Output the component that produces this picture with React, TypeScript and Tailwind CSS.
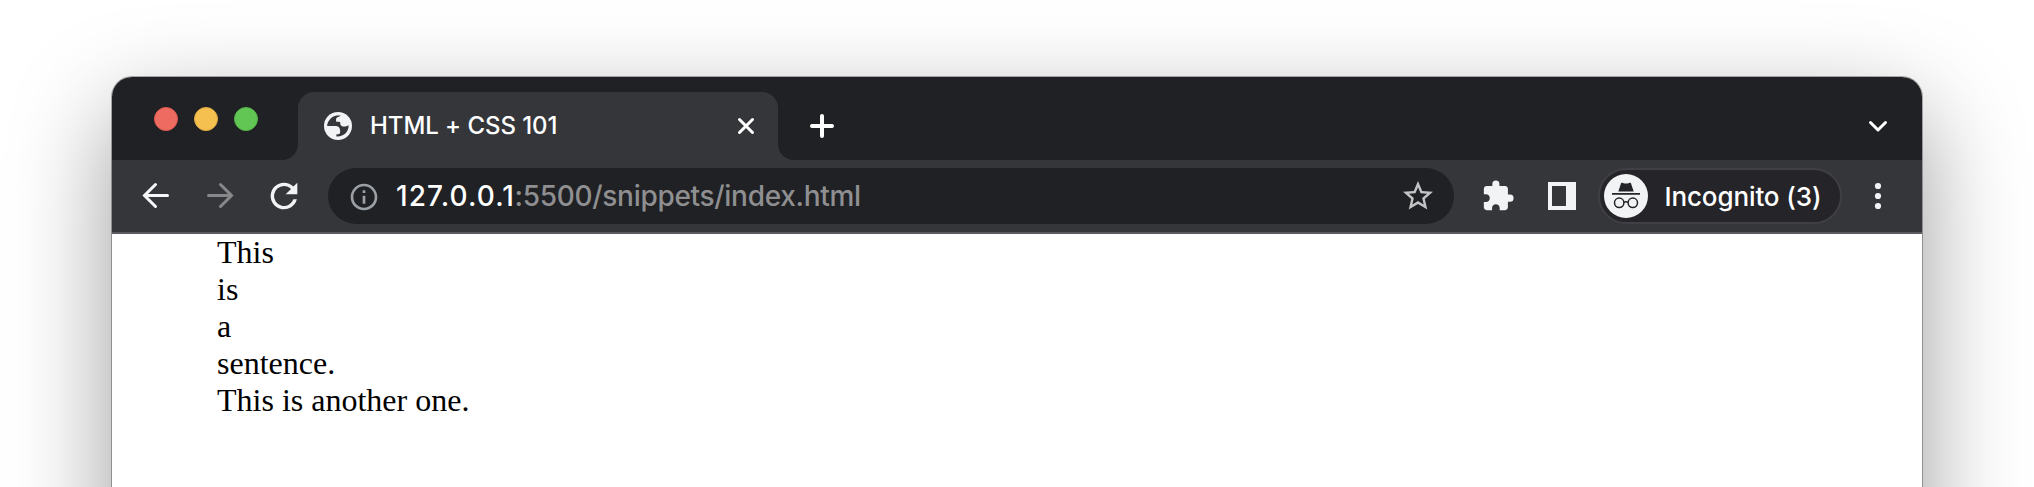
import type { ReactNode } from 'react';

function TabStrip() {
  return (
    <div className="flex h-[83px] bg-[#202124] pl-[38px]">
      <div className="flex w-[132px] gap-4 pt-[30px] pl-[4px]">
        <span className="size-6 rounded-full border border-[#df5950] bg-[#ed6b60]" />
        <span className="size-6 rounded-full border border-[#dfa944] bg-[#f5c04f]" />
        <span className="size-6 rounded-full border border-[#55b449] bg-[#62c655]" />
      </div>
      <div className="flex items-end">
        <CornerLeft />
      </div>
      <div className="mt-[15px] flex w-[480px] items-start rounded-t-[16px] bg-[#35363a] pl-[26px] text-white">
        <svg className="mt-5 size-7 shrink-0" viewBox="0 0 28 28">
          <circle cx="14" cy="14" r="14" fill="#f1f3f4" />
          <path
            d="M3.1 14C3.4 9 7.6 4.2 12.6 3.5L16.7 3.6C15.9 5.1 12.3 4.9 12.1 7.1V9.8H14.8C16.5 9.8 16.3 11 16.4 12.4C16.6 14.6 21.4 15.2 24.6 13.2C24.9 19.5 19.8 24.9 12.4 24.4V22.2H14.2C15.8 22.2 16.1 21.4 16.1 19.6V18.2C16 16 14.6 14.2 12.2 14Z"
            fill="#35363a"
          />
        </svg>
        <span className="mt-[17px] ml-[18px] flex-1 text-[24px] leading-[34px] font-[450] tracking-[-0.06px] whitespace-nowrap">
          HTML + CSS 101
        </span>
        <svg className="mt-6 mr-[22px] size-5" viewBox="0 0 20 20" stroke="#fff" strokeWidth="3" strokeLinecap="round">
          <path d="M3.5 3.5l13 13M16.5 3.5l-13 13" />
        </svg>
      </div>
      <div className="flex items-end">
        <CornerRight />
      </div>
      <svg className="mt-[37px] ml-[16px] size-6" viewBox="0 0 24 24" stroke="#fff" strokeWidth="4" strokeLinecap="round">
        <path d="M2 12h20M12 2v20" />
      </svg>
      <svg className="mt-[37px] mr-[32px] ml-auto size-6" viewBox="0 0 24 24" fill="none" stroke="#fff" strokeWidth="3" strokeLinecap="round" strokeLinejoin="round">
        <path d="M4.5 8.5l7.5 7.5l7.5-7.5" />
      </svg>
    </div>
  );
}

function CornerLeft() {
  return (
    <svg className="size-4" viewBox="0 0 16 16">
      <path d="M16 0v16H0C8.8 16 16 8.8 16 0z" fill="#35363a" />
    </svg>
  );
}

function CornerRight() {
  return (
    <svg className="size-4" viewBox="0 0 16 16">
      <path d="M0 0v16h16C7.2 16 0 8.8 0 0z" fill="#35363a" />
    </svg>
  );
}

function AddressBar() {
  return (
    <div className="ml-[24px] flex h-14 w-[1126px] items-center rounded-full bg-[#202124] pr-[18px] pl-5">
      <svg className="mt-px size-8 shrink-0" viewBox="0 0 24 24" fill="#9aa0a6">
        <path d="M11 7h2v2h-2zm0 4h2v6h-2zm1-9C6.48 2 2 6.48 2 12s4.48 10 10 10 10-4.48 10-10S17.52 2 12 2zm0 18c-4.41 0-8-3.59-8-8s3.59-8 8-8 8 3.59 8 8-3.59 8-8 8z" />
      </svg>
      <div className="ml-4 flex flex-1 text-[28px] leading-[34px] whitespace-nowrap">
        <span className="w-[118.5px] font-medium tracking-[1.1px] text-white">127.0.0.1</span>
        <span className="font-[450] tracking-[-0.3px] text-[#8f8f91]">:5500/snippets/index.html</span>
      </div>
      <svg className="size-9" viewBox="0 0 24 24" fill="#c3c4c6">
        <path d="M22 9.24l-7.19-.62L12 2 9.19 8.63 2 9.24l5.46 4.73L5.82 21 12 17.27 18.18 21l-1.63-7.03L22 9.24zM12 15.4l-3.76 2.27 1-4.28-3.32-2.88 4.38-.38L12 6.1l1.71 4.04 4.38.38-3.32 2.88 1 4.28L12 15.4z" />
      </svg>
    </div>
  );
}

function IncognitoBadge() {
  return (
    <div className="ml-[22px] flex h-14 w-[244px] items-center rounded-full border-2 border-[#3f3f45] bg-[#242429] pl-1">
      <svg className="size-11 shrink-0" viewBox="0 0 44 44">
        <circle cx="22" cy="22" r="22" fill="#f1f3f4" />
        <path d="M14.3 17.4L16.8 10C17.1 8.9 18 8.7 18.9 9C21 9.8 23 9.8 25.1 9C26 8.7 26.9 8.9 27.2 10L29.7 17.4Z" fill="#242429" />
        <path d="M8 19.9h28" stroke="#242429" strokeWidth="1.6" />
        <g fill="none" stroke="#242429" strokeWidth="1.5">
          <circle cx="15.2" cy="28.8" r="4.7" />
          <circle cx="28.8" cy="28.8" r="4.7" />
          <path d="M19.8 28.4q2.2-1.3 4.4 0" />
        </g>
      </svg>
      <span className="mt-px ml-[16.5px] text-[26px] leading-[34px] font-[450] tracking-[-0.12px] whitespace-nowrap text-white">
        Incognito (3)
      </span>
    </div>
  );
}

function Toolbar() {
  return (
    <div className="flex h-[74px] items-start border-b-2 border-[#5b5c5f] bg-[#35363a] pt-2 pl-[28px]">
      <div className="flex h-14 flex-1 items-center">
        <svg className="size-8" viewBox="0 0 32 32" fill="none" stroke="#f6f7f8" strokeWidth="3" strokeLinecap="round" strokeLinejoin="miter">
          <path d="M27.5 15.5H5M15.5 4.5l-11 11l11 11" />
        </svg>
        <svg className="ml-8 size-8" viewBox="0 0 32 32" fill="none" stroke="#87888a" strokeWidth="3" strokeLinecap="round" strokeLinejoin="miter">
          <path d="M4.5 15.5H27M16.5 4.5l11 11l-11 11" />
        </svg>
        <svg className="ml-[28px] size-10" viewBox="0 0 24 24" fill="#f1f3f4">
          <path d="M17.65 6.35A7.95 7.95 0 0 0 12 4a8 8 0 1 0 7.73 10h-2.08A6 6 0 1 1 12 6c1.66 0 3.14.69 4.22 1.78L13 11h7V4l-2.35 2.35z" />
        </svg>
        <AddressBar />
        <svg className="ml-[27px] size-[34px]" viewBox="0 0 24 24" fill="#f1f3f4">
          <path d="M20.5 11H19V7c0-1.1-.9-2-2-2h-4V3.5a2.5 2.5 0 0 0-5 0V5H4c-1.1 0-1.99.9-1.99 2v3.8H3.5c1.49 0 2.7 1.21 2.7 2.7s-1.21 2.7-2.7 2.7H2V20c0 1.1.9 2 2 2h3.8v-1.5c0-1.49 1.21-2.7 2.7-2.7 1.49 0 2.7 1.21 2.7 2.7V22H17c1.1 0 2-.9 2-2v-4h1.5a2.5 2.5 0 0 0 0-5z" />
        </svg>
        <div className="ml-[33px] flex size-7 border-4 border-r-[10px] border-[#f1f3f4]" />
        <IncognitoBadge />
        <svg className="ml-8 h-8 w-2" viewBox="0 0 8 32" fill="#f1f3f4">
          <circle cx="4" cy="6" r="3.1" />
          <circle cx="4" cy="16" r="3.1" />
          <circle cx="4" cy="26" r="3.1" />
        </svg>
      </div>
    </div>
  );
}

function Line({ children }: { children: ReactNode }) {
  return <div>{children}</div>;
}

function Page() {
  return (
    <div className="bg-white pl-[105px] font-['Liberation_Serif',serif] text-[32px] leading-[37px] text-black">
      <Line>This</Line>
      <Line>is</Line>
      <Line>a</Line>
      <Line>sentence.</Line>
      <Line>This is another one.</Line>
    </div>
  );
}

export default function App() {
  return (
    <div className="h-[487px] overflow-hidden bg-white pt-[77px] pl-[112px] font-['Inter',sans-serif]">
      <div className="h-[900px] w-[1810px] overflow-hidden rounded-[20px] bg-white shadow-[0_0_0_1px_rgba(0,0,0,0.3),0_36px_100px_rgba(0,0,0,0.4)]">
        <TabStrip />
        <Toolbar />
        <Page />
      </div>
    </div>
  );
}
